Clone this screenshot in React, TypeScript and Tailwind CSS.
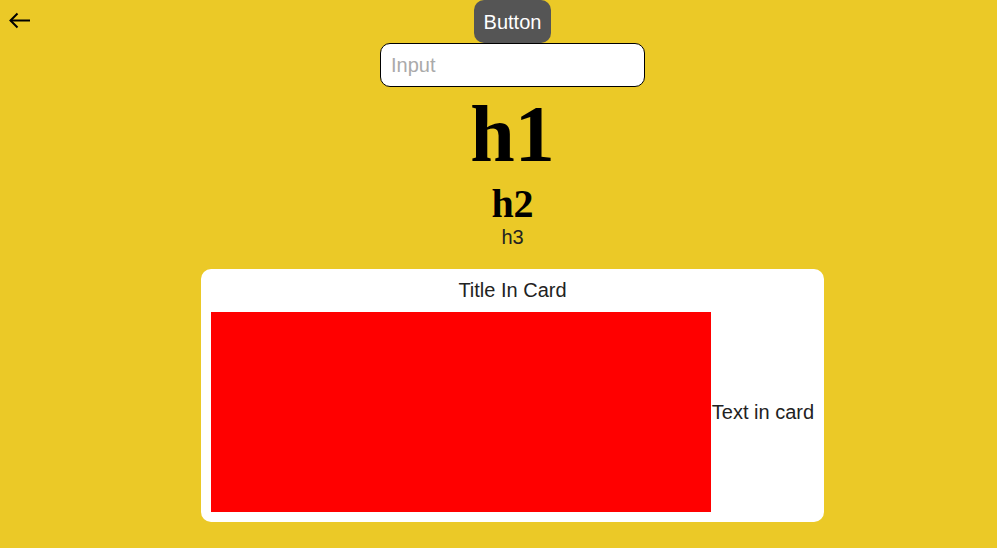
export default function App() {
  return (
    <div className="relative min-h-[548px] w-full bg-[#ebc927] font-['Liberation_Sans',Arial,sans-serif] text-[#222]">
      {/* back arrow */}
      <button className="absolute left-[8px] top-[8px] h-[26px] w-[26px]">
        <svg width="26" height="26" viewBox="0 0 26 26" fill="none" stroke="#000" strokeWidth="2" strokeLinecap="butt">
          <path d="M2.5 12.5H22" />
          <path d="M9.5 5.5 2.5 12.5l7 7" />
        </svg>
      </button>

      <div className="flex flex-col items-center pl-[28px]">
        <button className="h-[43px] rounded-[10px] bg-[#555555] px-[10px] text-[20px] text-white">Button</button>
        <input
          placeholder="Input"
          className="h-[44px] w-[265px] rounded-[10px] border border-black bg-white px-[10px] text-[20px] placeholder:text-[#aaa] outline-none"
        />
        <h1 className="mt-[8px] font-['Liberation_Serif','Times_New_Roman',serif] text-[80px] font-bold leading-[78px] text-black">h1</h1>
        <h2 className="mt-[11px] font-['Liberation_Serif','Times_New_Roman',serif] text-[40px] font-bold leading-[40px] text-black">h2</h2>
        <h3 className="mt-[1px] text-[20px] leading-[24px] text-[#222]">h3</h3>

        <div className="mt-[20px] flex flex-col items-center rounded-[10px] bg-white px-[10px] pb-[10px]">
          <div className="pt-[10px] pb-[10px] text-[20px] leading-[23px]">Title In Card</div>
          <div className="flex items-center">
            <div className="h-[200px] w-[500px] bg-[#ff0000]" />
            <div className="pl-[1px] text-[20px]">Text in card</div>
          </div>
        </div>
      </div>
    </div>
  )
}
